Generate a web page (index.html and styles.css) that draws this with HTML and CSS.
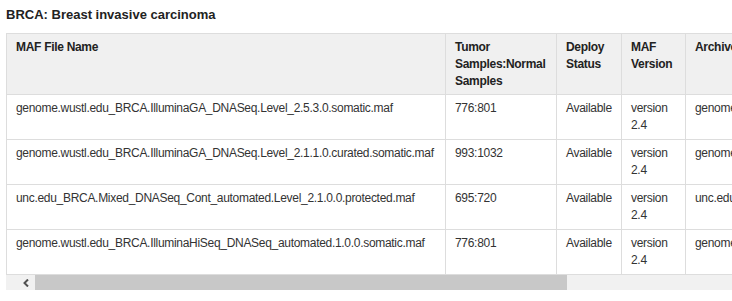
FILE: index.html
```html
<!DOCTYPE html>
<html>
<head>
<meta charset="utf-8">
<link rel="stylesheet" href="styles.css">
</head>
<body>
<h4 class="title">BRCA: Breast invasive carcinoma</h4>
<div class="scroller">
  <table class="maf">
    <colgroup>
      <col class="c-name"><col class="c-samples"><col class="c-status"><col class="c-version"><col class="c-archive">
    </colgroup>
    <thead>
      <tr>
        <th>MAF File Name</th>
        <th>Tumor Samples:Normal Samples</th>
        <th>Deploy Status</th>
        <th>MAF Version</th>
        <th>Archive Name</th>
      </tr>
    </thead>
    <tbody>
      <tr>
        <td>genome.wustl.edu_BRCA.IlluminaGA_DNASeq.Level_2.5.3.0.somatic.maf</td>
        <td>776:801</td>
        <td>Available</td>
        <td>version 2.4</td>
        <td>genome.wustl.edu_BRCA.IlluminaGA_DNASeq.Level_2.5.3.0</td>
      </tr>
      <tr>
        <td>genome.wustl.edu_BRCA.IlluminaGA_DNASeq.Level_2.1.1.0.curated.somatic.maf</td>
        <td>993:1032</td>
        <td>Available</td>
        <td>version 2.4</td>
        <td>genome.wustl.edu_BRCA.IlluminaGA_DNASeq.Level_2.1.1.0</td>
      </tr>
      <tr>
        <td>unc.edu_BRCA.Mixed_DNASeq_Cont_automated.Level_2.1.0.0.protected.maf</td>
        <td>695:720</td>
        <td>Available</td>
        <td>version 2.4</td>
        <td>unc.edu_BRCA.Mixed_DNASeq_Cont_automated.Level_2.1.0.0</td>
      </tr>
      <tr>
        <td>genome.wustl.edu_BRCA.IlluminaHiSeq_DNASeq_automated.1.0.0.somatic.maf</td>
        <td>776:801</td>
        <td>Available</td>
        <td>version 2.4</td>
        <td>genome.wustl.edu_BRCA.IlluminaHiSeq_DNASeq_automated.1.0.0</td>
      </tr>
    </tbody>
  </table>
  <div class="hscroll">
    <span class="hscroll-btn">
      <svg width="8" height="8" viewBox="0 0 8 8"><path d="M6 0.5 L2.5 4 L6 7.5" fill="none" stroke="#505050" stroke-width="2"/></svg>
    </span>
    <span class="hscroll-thumb"></span>
  </div>
</div>
</body>
</html>
```

FILE: styles.css
```css
html, body {
  margin: 0;
  padding: 0;
  background: #fff;
  font-family: "Liberation Sans", Arial, sans-serif;
  color: #333;
}

.title {
  margin: 6px 0 10px 6px;
  font-size: 13px;
  line-height: 17px;
  font-weight: bold;
  color: #222;
}

.scroller {
  margin-left: 6px;
  width: 726px;
  overflow: hidden;
}

.maf {
  border-collapse: collapse;
  table-layout: fixed;
  width: 1120px;
  font-size: 12px;
  line-height: 17px;
  letter-spacing: -0.3px;
  border-left: 1px solid #ddd;
  border-top: 1px solid #ddd;
}

.c-name { width: 439px; }
.c-samples { width: 111px; }
.c-status { width: 65px; }
.c-version { width: 64px; }
.c-archive { width: 441px; }

.maf th,
.maf td {
  padding: 5px 9px;
  text-align: left;
  vertical-align: top;
  border-right: 1px solid #ddd;
  border-bottom: 1px solid #ddd;
  white-space: normal;
}

.maf th {
  padding-bottom: 4px;
  background: #f0f0f0;
  font-weight: bold;
  color: #222;
}

.maf td:first-child,
.maf td:last-child {
  white-space: nowrap;
  overflow: hidden;
}

.maf tbody td {
  height: 34px;
}

.hscroll {
  display: flex;
  height: 15px;
  background: #f1f1f1;
}

.hscroll-btn {
  width: 29px;
  display: flex;
  align-items: center;
  justify-content: flex-end;
  padding-right: 5px;
  box-sizing: border-box;
}

.hscroll-thumb {
  width: 532px;
  background: #c8c8c8;
}
```
